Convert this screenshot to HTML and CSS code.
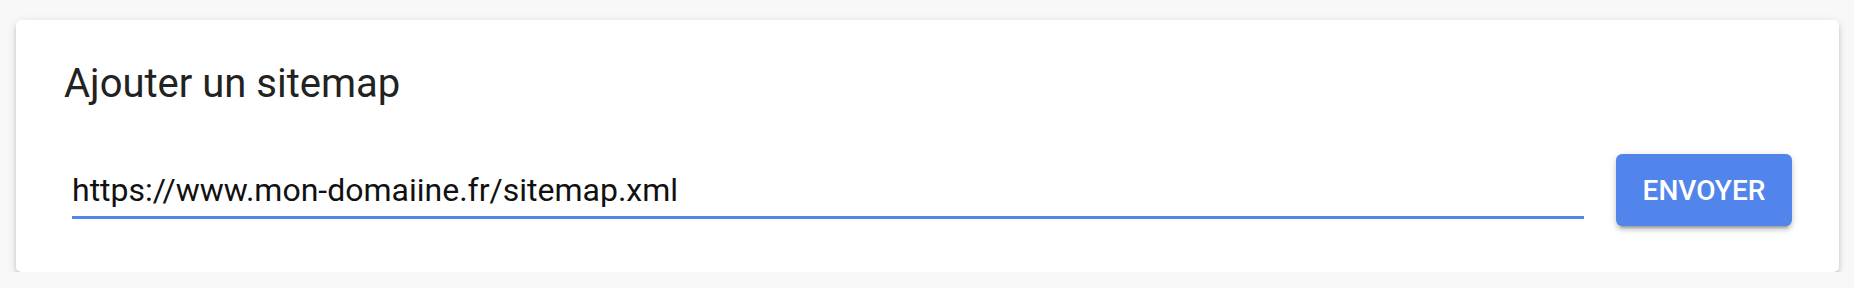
FILE: index.html
```html
<!DOCTYPE html>
<html lang="fr">
<head>
<meta charset="utf-8">
<title>Ajouter un sitemap</title>
<link rel="stylesheet" href="styles.css">
</head>
<body>
  <section class="card">
    <h2 class="card-title">Ajouter un sitemap</h2>
    <div class="row">
      <div class="field">
        <span class="field-value">https://www.mon-domaiine.fr/sitemap.xml</span>
      </div>
      <button class="btn" type="button">ENVOYER</button>
    </div>
  </section>
</body>
</html>
```
FILE: styles.css
```css
html, body {
  margin: 0;
  padding: 0;
}
body {
  background: #f8f8f8;
  font-family: Roboto, "Liberation Sans", Arial, sans-serif;
  padding: 20px 15px 0 16px;
}
.card {
  background: #ffffff;
  border-radius: 5px;
  padding: 32px 47px 46px 48px;
  box-shadow: 0 6px 2px -4px rgba(0,0,0,.2), 0 4px 4px 0 rgba(0,0,0,.14), 0 2px 10px 0 rgba(0,0,0,.12);
}
.card-title {
  margin: 0;
  font-size: 40px;
  line-height: 64px;
  font-weight: 400;
  color: #222222;
}
.row {
  display: flex;
  align-items: flex-start;
  gap: 32px;
  margin-top: 38px;
}
.field {
  flex: 1;
  margin-left: 8px;
  margin-top: 18px;
  padding-bottom: 6px;
  border-bottom: 3px solid #5285ec;
}
.field-value {
  display: block;
  font-size: 32px;
  line-height: 37.5px;
  color: #111111;
  white-space: nowrap;
}
.btn {
  flex: none;
  width: 176px;
  height: 72px;
  border: 0;
  border-radius: 6px;
  background: #5285ec;
  color: #ffffff;
  font-family: Roboto, "Liberation Sans", Arial, sans-serif;
  font-weight: 500;
  font-size: 28px;
  letter-spacing: 0;
  padding: 0;
  box-shadow: 0 6px 2px -4px rgba(0,0,0,.2), 0 4px 4px 0 rgba(0,0,0,.14), 0 2px 10px 0 rgba(0,0,0,.12);
}
```
